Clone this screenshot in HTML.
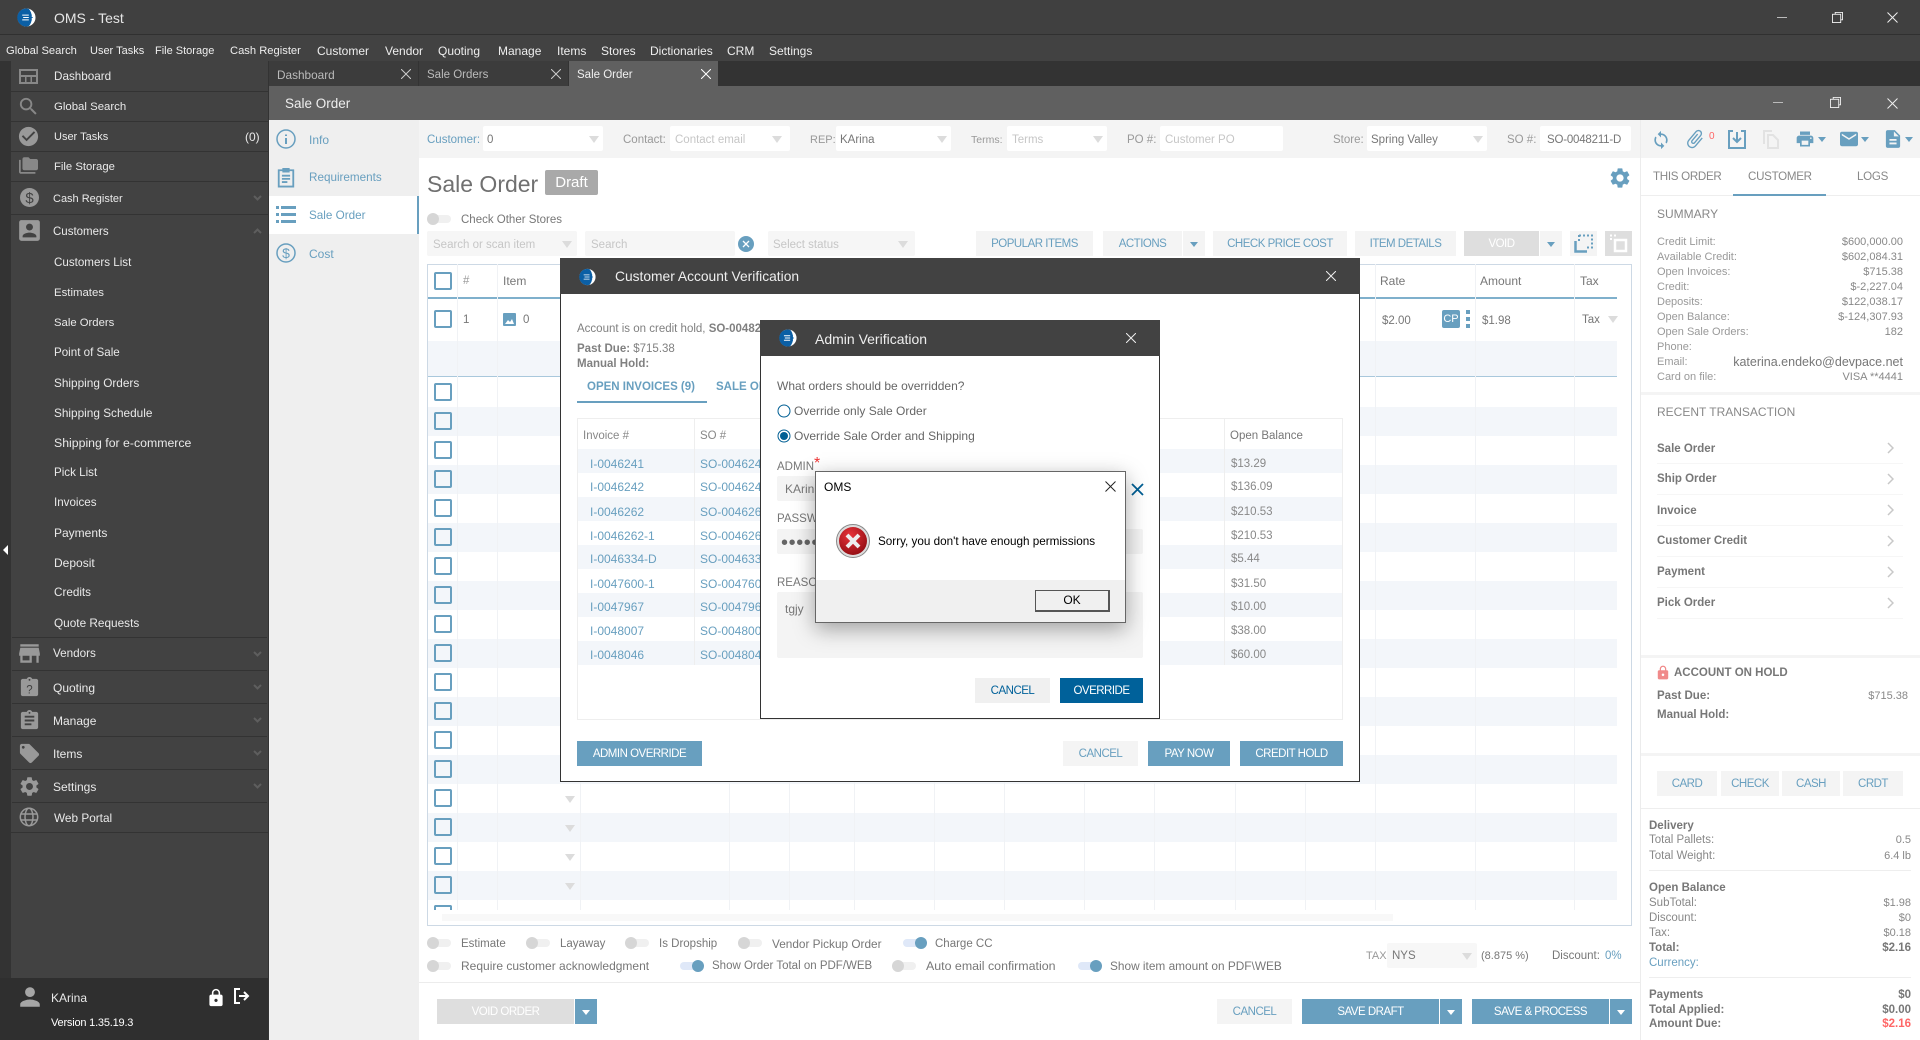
<!DOCTYPE html>
<html><head><meta charset="utf-8"><title>OMS - Test</title>
<style>
html,body{margin:0;padding:0;width:1920px;height:1040px;overflow:hidden;background:#fff}
body{position:relative;font-family:"Liberation Sans",sans-serif;font-size:11.5px;color:#777}
.r,.t,svg{position:absolute}
.t{line-height:16px;white-space:nowrap}
.s .t{color:#e9e9e9;font-size:12px}
.b{position:absolute;display:flex;align-items:center;justify-content:center;font-size:11.5px;letter-spacing:-.5px;white-space:nowrap;background:#f4f4f4;color:#689fbf}
.p{background:#689fbf;color:#fff}
.g{background:#dedede;color:#fff}
.f{position:absolute;background:#fff;border-radius:2px}
.l{color:#999}
.ph{color:#c6c6c6}
.v{color:#777}
.bl{color:#689fbf}
.sl{position:absolute;height:1px;background:#f6f6f6}
.w{position:absolute;width:0;height:0;border-left:5px solid transparent;border-right:5px solid transparent;border-top:7px solid #dcdcdc}
.cb{position:absolute;left:434px;width:14px;height:14px;border:2px solid #689fbf;border-radius:2px;background:transparent}
.tg{position:absolute;width:24px;height:8px;background:#f0f0f0;border-radius:4px}
.tg i{position:absolute;left:0;top:-2px;width:12px;height:12px;border-radius:6px;background:#d6d6d6}
.tg.on{background:#dfe8f8}
.tg.on i{left:12px;background:#689fbf}
.cl{position:absolute;top:264px;width:1px;height:646px;background:#f0f2f5}
.ca{position:absolute;width:0;height:0;border-left:4px solid transparent;border-right:4px solid transparent;border-top:5px solid #689fbf}
.ri{left:1657px;font-weight:bold;color:#777}
.m{color:#eee;font-size:12px}
.x{font-size:11px;color:#888}
</style></head><body>

<!-- top bars -->
<div class="r" style="left:0;top:0;width:1920px;height:34px;background:#404040"></div>
<div class="r" style="left:0;top:34px;width:1920px;height:1px;background:#303030"></div>
<div class="r" style="left:0;top:35px;width:1920px;height:26px;background:#424242"></div>
<div class="r" style="left:0;top:61px;width:1920px;height:25px;background:#333"></div>

<svg style="left:17px;top:8px" width="19" height="19" viewBox="0 0 20 20"><circle cx="10" cy="10" r="9.500" fill="#fff"/><path d="M12.500.9A9.500 9.500 0 1 0 12.500 19.100 13 13 0 0 0 15.500 10 13 13 0 0 0 12.500.9z" fill="#0b5fa5"/><path d="M5.500 7.500h7M6.500 10h6M5.500 12.500h7" stroke="#fff"/><path d="M12.500 7.500h3M12.500 10h4M12.500 12.500h3" stroke="#0b5fa5"/></svg>
<div class="t" style="left:54px;top:10px;font-size:14px;color:#e6e6e6">OMS - Test</div>

<div class="t m" style="left:6px;top:43px;font-size:11.200px">Global Search</div>
<div class="t m" style="left:90px;top:43px;font-size:11px">User Tasks</div>
<div class="t m" style="left:155px;top:43px;font-size:11px">File Storage</div>
<div class="t m" style="left:230px;top:43px;font-size:11.200px">Cash Register</div>
<div class="t m" style="left:317px;top:43px">Customer</div>
<div class="t m" style="left:385px;top:43px">Vendor</div>
<div class="t m" style="left:438px;top:43px">Quoting</div>
<div class="t m" style="left:498px;top:43px">Manage</div>
<div class="t m" style="left:557px;top:43px">Items</div>
<div class="t m" style="left:601px;top:43px">Stores</div>
<div class="t m" style="left:650px;top:43px">Dictionaries</div>
<div class="t m" style="left:727px;top:43px">CRM</div>
<div class="t m" style="left:769px;top:43px">Settings</div>

<!-- window controls -->
<div class="r" style="left:1777px;top:17px;width:10px;height:1px;background:#bbb"></div>
<svg style="left:1832px;top:12px" width="11" height="11" viewBox="0 0 12 12" fill="none" stroke="#eee"><path d="M3.500 2.500V.5h8v8h-2"/><rect x=".5" y="2.500" width="9" height="9"/></svg>
<svg style="left:1887px;top:12px" width="11" height="11" stroke="#eee"><path d="M.5.5l10 10M10.500.5l-10 10"/></svg>

<!-- sidebar -->
<div class="s">
<div class="r" style="left:0;top:61px;width:11px;height:917px;background:#333"></div>
<div class="r" style="left:11px;top:61px;width:257px;height:917px;background:#424242"></div>
<div class="r" style="left:268px;top:61px;width:1px;height:979px;background:#333"></div>
<div class="r" style="left:0;top:978px;width:268px;height:62px;background:#2f2f2f"></div>
<svg style="left:2px;top:545px" width="7" height="10"><path d="M6 0v10L1 5z" fill="#fff"/></svg>

<div class="r" style="left:11px;top:91px;width:257px;height:1px;background:#333"></div>
<div class="r" style="left:11px;top:121px;width:257px;height:1px;background:#333"></div>
<div class="r" style="left:11px;top:151px;width:257px;height:1px;background:#333"></div>
<div class="r" style="left:11px;top:181px;width:257px;height:1px;background:#333"></div>
<div class="r" style="left:11px;top:214px;width:257px;height:1px;background:#333"></div>
<div class="r" style="left:12px;top:637px;width:255px;height:1px;background:#333"></div>
<div class="r" style="left:12px;top:670px;width:255px;height:1px;background:#333"></div>
<div class="r" style="left:12px;top:703px;width:255px;height:1px;background:#333"></div>
<div class="r" style="left:12px;top:736px;width:255px;height:1px;background:#333"></div>
<div class="r" style="left:12px;top:769px;width:255px;height:1px;background:#333"></div>
<div class="r" style="left:12px;top:802px;width:255px;height:1px;background:#333"></div>
<div class="r" style="left:11px;top:832px;width:257px;height:1px;background:#333"></div>

<svg style="left:19px;top:69px" width="19" height="15" viewBox="0 0 19 15"><path d="M0 0h19v15H0zM2 2v4h15V2zM2 8v5h4V8zm5.500 0v5h4V8zM13 8v5h4V8z" fill="#888" fill-rule="evenodd"/></svg>
<svg style="left:17px;top:95px" width="23" height="23" viewBox="0 0 24 24" fill="#888"><path d="M15.500 14h-.79l-.28-.27C15.410 12.590 16 11.110 16 9.500 16 5.910 13.090 3 9.500 3S3 5.910 3 9.500 5.910 16 9.500 16c1.610 0 3.090-.59 4.230-1.570l.27.28v.79l5 4.990L20.490 19l-4.990-5zm-6 0C7.010 14 5 11.990 5 9.500S7.010 5 9.500 5 14 7.010 14 9.500 11.990 14 9.500 14z"/></svg>
<svg style="left:17px;top:125px" width="23" height="23" viewBox="0 0 24 24" fill="#999"><path d="M12 2C6.480 2 2 6.480 2 12s4.480 10 10 10 10-4.480 10-10S17.520 2 12 2zm-2 15l-5-5 1.410-1.410L10 14.170l7.590-7.590L19 8l-9 9z"/></svg>
<svg style="left:19px;top:157px" width="19" height="17" viewBox="0 0 22 19" fill="#888"><path d="M0 3v14c0 1 1 2 2 2h17v-2H2V3z"/><path d="M4 2c0-1 1-2 2-2h5l2 2h7c1 0 2 1 2 2v9c0 1-1 2-2 2H6c-1 0-2-1-2-2z"/></svg>
<svg style="left:20px;top:188px" width="19" height="19" viewBox="0 0 19 19"><circle cx="9.500" cy="9.500" r="9.500" fill="#999"/><text x="9.500" y="15" text-anchor="middle" font-family="Liberation Sans" font-size="15" fill="#424242">$</text></svg>
<svg style="left:18px;top:219px" width="23" height="23" viewBox="2 2 20 20" fill="#999"><path d="M3 5v14c0 1.100.89 2 2 2h14c1.100 0 2-.9 2-2V5c0-1.100-.9-2-2-2H5c-1.110 0-2 .9-2 2zm12 4c0 1.660-1.340 3-3 3s-3-1.340-3-3 1.340-3 3-3 3 1.340 3 3zm-9 8c0-2 4-3.100 6-3.100s6 1.100 6 3.100v1H6v-1z"/></svg>
<svg style="left:18px;top:642px" width="23" height="23" viewBox="2 3 20 18" fill="#999"><path d="M20 4H4v2h16V4zm1 10v-2l-1-5H4l-1 5v2h1v6h10v-6h4v6h2v-6h1zm-9 4H6v-4h6v4z"/></svg>
<svg style="left:18px;top:676px" width="23" height="23" viewBox="0 0 24 24" fill="#999"><path d="M19 3h-4.180C14.400 1.840 13.300 1 12 1c-1.300 0-2.400.84-2.820 2H5c-1.100 0-2 .9-2 2v14c0 1.100.9 2 2 2h14c1.100 0 2-.9 2-2V5c0-1.100-.9-2-2-2zm-7 0c.55 0 1 .45 1 1s-.45 1-1 1-1-.45-1-1 .45-1 1-1z"/><text x="12" y="18" text-anchor="middle" font-size="12" font-family="Liberation Sans" fill="#424242">?</text></svg>
<svg style="left:18px;top:709px" width="23" height="23" viewBox="0 0 24 24" fill="#999"><path d="M19 3h-4.180C14.400 1.840 13.300 1 12 1c-1.300 0-2.400.84-2.820 2H5c-1.100 0-2 .9-2 2v14c0 1.100.9 2 2 2h14c1.100 0 2-.9 2-2V5c0-1.100-.9-2-2-2zm-7 0c.55 0 1 .45 1 1s-.45 1-1 1-1-.45-1-1 .45-1 1-1zm2 14H7v-2h7v2zm3-4H7v-2h10v2zm0-4H7V7h10v2z"/></svg>
<svg style="left:18px;top:742px" width="23" height="23" viewBox="0 0 24 24" fill="#999"><path d="M21.410 11.580l-9-9C12.050 2.220 11.550 2 11 2H4c-1.100 0-2 .9-2 2v7c0 .55.22 1.050.59 1.420l9 9c.36.36.86.58 1.410.58.55 0 1.050-.22 1.410-.59l7-7c.37-.36.59-.86.59-1.410 0-.55-.23-1.060-.59-1.420zM5.500 7C4.670 7 4 6.330 4 5.500S4.670 4 5.500 4 7 4.670 7 5.500 6.330 7 5.500 7z"/></svg>
<svg style="left:18px;top:775px" width="23" height="23" viewBox="0 0 24 24" fill="#999"><path d="M19.140 12.940c.04-.3.06-.61.06-.94 0-.32-.02-.64-.07-.94l2.030-1.580c.18-.14.23-.41.12-.61l-1.920-3.320c-.12-.22-.37-.29-.59-.22l-2.390.96c-.5-.38-1.030-.7-1.620-.94l-.36-2.540c-.04-.24-.24-.41-.48-.41h-3.840c-.24 0-.43.17-.47.41l-.36 2.540c-.59.24-1.130.57-1.620.94l-2.390-.96c-.22-.08-.47 0-.59.22L2.740 8.870c-.12.21-.08.47.12.61l2.030 1.580c-.05.3-.09.63-.09.94s.02.64.07.94l-2.030 1.580c-.18.14-.23.41-.12.61l1.920 3.320c.12.22.37.29.59.22l2.390-.96c.5.38 1.030.7 1.620.94l.36 2.540c.05.24.24.41.48.41h3.840c.24 0 .44-.17.47-.41l.36-2.540c.59-.24 1.130-.56 1.620-.94l2.390.96c.22.08.47 0 .59-.22l1.920-3.320c.12-.22.07-.47-.12-.61l-2.010-1.580zM12 15.600c-1.980 0-3.600-1.620-3.600-3.600s1.620-3.600 3.600-3.600 3.600 1.620 3.600 3.600-1.620 3.600-3.600 3.600z"/></svg>
<svg style="left:19px;top:807px" width="20" height="20" viewBox="0 0 20 20" fill="none" stroke="#999" stroke-width="1.500"><circle cx="10" cy="10" r="8.700"/><ellipse cx="10" cy="10" rx="4" ry="8.700"/><path d="M2 7h16M2 13h16"/></svg>

<div class="t" style="left:54px;top:69px;font-size:11.700px">Dashboard</div>
<div class="t" style="left:54px;top:99px;font-size:11.400px">Global Search</div>
<div class="t" style="left:54px;top:129px;font-size:11px">User Tasks</div>
<div class="t" style="left:245px;top:129px">(0)</div>
<div class="t" style="left:54px;top:159px;font-size:11.300px">File Storage</div>
<div class="t" style="left:53px;top:191px;font-size:11px">Cash Register</div>
<div class="t" style="left:53px;top:224px;font-size:11.500px">Customers</div>
<div class="t" style="left:54px;top:255px;font-size:11.600px">Customers List</div>
<div class="t" style="left:54px;top:285px;font-size:11.400px">Estimates</div>
<div class="t" style="left:54px;top:315px;font-size:11.300px">Sale Orders</div>
<div class="t" style="left:54px;top:345px;font-size:11.600px">Point of Sale</div>
<div class="t" style="left:54px;top:375px;font-size:11.800px">Shipping Orders</div>
<div class="t" style="left:54px;top:405px;font-size:11.800px">Shipping Schedule</div>
<div class="t" style="left:54px;top:435px;font-size:12.300px">Shipping for e-commerce</div>
<div class="t" style="left:54px;top:465px;font-size:11.600px">Pick List</div>
<div class="t" style="left:54px;top:495px;font-size:11.600px">Invoices</div>
<div class="t" style="left:54px;top:525px">Payments</div>
<div class="t" style="left:54px;top:555px">Deposit</div>
<div class="t" style="left:54px;top:585px;font-size:11.700px">Credits</div>
<div class="t" style="left:54px;top:615px;font-size:11.800px">Quote Requests</div>
<div class="t" style="left:53px;top:646px;font-size:11.700px">Vendors</div>
<div class="t" style="left:53px;top:680px">Quoting</div>
<div class="t" style="left:53px;top:713px">Manage</div>
<div class="t" style="left:53px;top:746px">Items</div>
<div class="t" style="left:53px;top:779px">Settings</div>
<div class="t" style="left:54px;top:810px;font-size:11.800px">Web Portal</div>

<svg style="left:253px;top:195px" width="9" height="6" fill="none" stroke="#5e5e5e" stroke-width="2"><path d="M1 1l3.500 3.500L8 1"/></svg>
<svg style="left:253px;top:228px" width="9" height="6" fill="none" stroke="#5e5e5e" stroke-width="2"><path d="M1 5l3.500-3.500L8 5"/></svg>
<svg style="left:253px;top:651px" width="9" height="6" fill="none" stroke="#5e5e5e" stroke-width="2"><path d="M1 1l3.500 3.500L8 1"/></svg>
<svg style="left:253px;top:684px" width="9" height="6" fill="none" stroke="#5e5e5e" stroke-width="2"><path d="M1 1l3.500 3.500L8 1"/></svg>
<svg style="left:253px;top:717px" width="9" height="6" fill="none" stroke="#5e5e5e" stroke-width="2"><path d="M1 1l3.500 3.500L8 1"/></svg>
<svg style="left:253px;top:750px" width="9" height="6" fill="none" stroke="#5e5e5e" stroke-width="2"><path d="M1 1l3.500 3.500L8 1"/></svg>
<svg style="left:253px;top:783px" width="9" height="6" fill="none" stroke="#5e5e5e" stroke-width="2"><path d="M1 1l3.500 3.500L8 1"/></svg>

<svg style="left:18px;top:986px" width="24" height="22" viewBox="3 3 18 18" fill="#a6a6a6"><path d="M12 12c2.210 0 4-1.790 4-4s-1.790-4-4-4-4 1.790-4 4 1.790 4 4 4zm0 2c-2.670 0-8 1.340-8 4v2h16v-2c0-2.660-5.330-4-8-4z"/></svg>
<div class="t" style="left:51px;top:990px">KArina</div>
<div class="t" style="left:51px;top:1015px;font-size:11px;color:#fff;letter-spacing:-.2px">Version 1.35.19.3</div>
<svg style="left:207px;top:988px" width="18" height="19" viewBox="3 0 18 23" fill="#fff"><path d="M18 8h-1V6c0-2.760-2.240-5-5-5S7 3.240 7 6v2H6c-1.100 0-2 .9-2 2v10c0 1.100.9 2 2 2h12c1.100 0 2-.9 2-2V10c0-1.100-.9-2-2-2zm-6 9c-1.100 0-2-.9-2-2s.9-2 2-2 2 .9 2 2-.9 2-2 2zm3.100-9H8.900V6c0-1.710 1.390-3.100 3.100-3.100 1.710 0 3.100 1.390 3.100 3.100v2z"/></svg>
<svg style="left:234px;top:988px" width="17" height="16" viewBox="0 0 17 16" fill="none" stroke="#fff" stroke-width="2"><path d="M6 1H1v14h5"/><path d="M5 8h9M10 4l4 4-4 4"/></svg>
</div>

<!-- tabs -->
<div class="r" style="left:269px;top:61px;width:149px;height:25px;background:#3c3c3c"></div>
<div class="r" style="left:419px;top:61px;width:149px;height:25px;background:#3c3c3c"></div>
<div class="r" style="left:569px;top:61px;width:149px;height:25px;background:#606060"></div>
<div class="t" style="left:277px;top:67px;font-size:11.800px;color:#bbb">Dashboard</div>
<div class="t" style="left:427px;top:67px;font-size:11.500px;color:#bbb">Sale Orders</div>
<div class="t" style="left:577px;top:67px;font-size:11.500px;color:#f0f0f0">Sale Order</div>
<svg style="left:401px;top:69px" width="10" height="10" stroke="#ccc"><path d="M0 0l10 10M10 0L0 10"/></svg>
<svg style="left:551px;top:69px" width="10" height="10" stroke="#ccc"><path d="M0 0l10 10M10 0L0 10"/></svg>
<svg style="left:701px;top:69px" width="10" height="10" stroke="#fff"><path d="M0 0l10 10M10 0L0 10"/></svg>

<!-- sub window title -->
<div class="r" style="left:269px;top:86px;width:1651px;height:34px;background:#606060"></div>
<div class="t" style="left:285px;top:96px;font-size:13.500px;color:#eee">Sale Order</div>
<div class="r" style="left:1773px;top:102px;width:10px;height:1px;background:#bbb"></div>
<svg style="left:1830px;top:97px" width="11" height="11" viewBox="0 0 12 12" fill="none" stroke="#eee"><path d="M3.500 2.500V.5h8v8h-2"/><rect x=".5" y="2.500" width="9" height="9"/></svg>
<svg style="left:1887px;top:98px" width="11" height="11" stroke="#eee"><path d="M.5.5l10 10M10.500.5l-10 10"/></svg>

<!-- left nav -->
<div class="r" style="left:269px;top:120px;width:150px;height:920px;background:#efefef"></div>
<div class="r" style="left:269px;top:196px;width:150px;height:38px;background:#fff"></div>
<div class="r" style="left:417px;top:196px;width:2px;height:38px;background:#689fbf"></div>
<svg style="left:276px;top:129px" width="20" height="20" fill="none" stroke="#689fbf" stroke-width="1.500"><circle cx="10" cy="10" r="9"/><path d="M10 9v6M10 5.500v1.500" stroke-width="2"/></svg>
<svg style="left:276px;top:167px" width="20" height="21" viewBox="1 0 22 22" fill="none" stroke="#689fbf" stroke-width="2"><path d="M9 3H4v18h16V3h-5"/><path d="M9 1.500h6v3H9z" fill="#689fbf"/><path d="M7.500 9h9M7.500 12.500h9M7.500 16h6"/></svg>
<svg style="left:276px;top:205px" width="20" height="20" fill="#689fbf"><path d="M0 1h3v3H0zM5 1h15v3H5zM0 8h3v3H0zM5 8h15v3H5zM0 15h3v3H0zM5 15h15v3H5z"/></svg>
<svg style="left:276px;top:243px" width="20" height="20"><circle cx="10" cy="10" r="9" fill="none" stroke="#689fbf" stroke-width="1.500"/><text x="10" y="15" text-anchor="middle" font-family="Liberation Sans" font-size="14" fill="#689fbf">$</text></svg>
<div class="t bl" style="left:309px;top:132px;font-size:12px">Info</div>
<div class="t bl" style="left:309px;top:170px;font-size:11.700px">Requirements</div>
<div class="t bl" style="left:309px;top:208px;font-size:11.700px">Sale Order</div>
<div class="t bl" style="left:309px;top:246px;font-size:12px">Cost</div>

<!-- toolbar -->
<div class="r" style="left:419px;top:120px;width:1501px;height:38px;background:#f4f4f4"></div>
<div class="t bl" style="left:427px;top:132px">Customer:</div>
<div class="f" style="left:483px;top:126px;width:120px;height:25px"></div>
<div class="t v" style="left:487px;top:132px">0</div><div class="w" style="left:589px;top:136px"></div>
<div class="t l" style="left:623px;top:132px">Contact:</div>
<div class="f" style="left:670px;top:126px;width:120px;height:25px"></div>
<div class="t ph" style="left:675px;top:132px">Contact email</div><div class="w" style="left:772px;top:136px"></div>
<div class="t l" style="left:810px;top:132px;font-size:11px">REP:</div>
<div class="f" style="left:836px;top:126px;width:115px;height:25px"></div>
<div class="t v" style="left:840px;top:132px">KArina</div><div class="w" style="left:937px;top:136px"></div>
<div class="t l" style="left:971px;top:132px;font-size:10.500px">Terms:</div>
<div class="f" style="left:1007px;top:126px;width:100px;height:25px"></div>
<div class="t ph" style="left:1012px;top:132px">Terms</div><div class="w" style="left:1093px;top:136px"></div>
<div class="t l" style="left:1127px;top:132px">PO #:</div>
<div class="f" style="left:1160px;top:126px;width:123px;height:25px"></div>
<div class="t ph" style="left:1165px;top:132px">Customer PO</div>
<div class="t l" style="left:1333px;top:132px">Store:</div>
<div class="f" style="left:1367px;top:126px;width:120px;height:25px"></div>
<div class="t v" style="left:1371px;top:132px">Spring Valley</div><div class="w" style="left:1473px;top:136px"></div>
<div class="t l" style="left:1507px;top:132px">SO #:</div>
<div class="f" style="left:1540px;top:126px;width:91px;height:25px"></div>
<div class="t v" style="left:1547px;top:132px;letter-spacing:-.2px">SO-0048211-D</div>

<!-- right toolbar icons -->
<div class="r" style="left:1640px;top:120px;width:1px;height:920px;background:#ececec"></div>
<svg style="left:1651px;top:130px" width="20" height="20" viewBox="0 0 24 24" fill="#689fbf"><path d="M12 4V1L8 5l4 4V6c3.310 0 6 2.690 6 6 0 1.010-.25 1.970-.7 2.800l1.460 1.460C19.540 15.030 20 13.570 20 12c0-4.420-3.580-8-8-8zm0 14c-3.310 0-6-2.690-6-6 0-1.010.25-1.970.7-2.800L5.240 7.740C4.460 8.970 4 10.430 4 12c0 4.420 3.580 8 8 8v3l4-4-4-4v3z"/></svg>
<svg style="left:1684px;top:128px" width="22" height="22" viewBox="0 0 24 24" fill="#689fbf"><path transform="rotate(40 12 12)" d="M16.500 6v11.500c0 2.210-1.790 4-4 4s-4-1.790-4-4V5c0-1.380 1.120-2.500 2.500-2.500s2.500 1.120 2.500 2.500v10.500c0 .55-.45 1-1 1s-1-.45-1-1V6H10v9.500c0 1.380 1.120 2.500 2.500 2.500s2.500-1.120 2.500-2.500V5c0-2.210-1.790-4-4-4S7 2.790 7 5v12.500c0 3.040 2.460 5.500 5.500 5.500s5.500-2.460 5.500-5.500V6h-1.500z"/></svg>
<div class="t" style="left:1709px;top:129px;font-size:10px;color:#f66">0</div>
<svg style="left:1728px;top:130px" width="18" height="19" fill="none" stroke="#689fbf" stroke-width="2"><path d="M5 1H1v17h16V1h-4"/><path d="M9 2v10M5 8l4 4 4-4"/></svg>
<svg style="left:1763px;top:130px" width="16" height="19" fill="none" stroke="#e2e2e2" stroke-width="2"><path d="M9 1H1v13M5 5h5l5 5v8H5z"/></svg>
<svg style="left:1795px;top:129px" width="20" height="20" viewBox="0 0 24 24" fill="#689fbf"><path d="M19 8H5c-1.660 0-3 1.340-3 3v6h4v4h12v-4h4v-6c0-1.660-1.340-3-3-3zm-3 11H8v-5h8v5zm3-7c-.55 0-1-.45-1-1s.45-1 1-1 1 .45 1 1-.45 1-1 1zm-1-9H6v4h12V3z"/></svg>
<div class="ca" style="left:1818px;top:137px"></div>
<svg style="left:1840px;top:129px" width="18" height="20" viewBox="2 3 20 18" fill="#689fbf"><path d="M20 4H4c-1.100 0-1.990.9-1.990 2L2 18c0 1.100.9 2 2 2h16c1.100 0 2-.9 2-2V6c0-1.100-.9-2-2-2zm0 4l-8 5-8-5V6l8 5 8-5v2z"/></svg>
<div class="ca" style="left:1861px;top:137px"></div>
<svg style="left:1885px;top:129px" width="16" height="20" viewBox="3 2 18 20" fill="#689fbf"><path d="M14 2H6c-1.100 0-1.990.9-1.990 2L4 20c0 1.100.89 2 1.990 2H18c1.100 0 2-.9 2-2V8l-6-6zm2 16H8v-2h8v2zm0-4H8v-2h8v2zm-3-5V3.500L18.500 9H13z"/></svg>
<div class="ca" style="left:1905px;top:137px"></div>

<!-- heading -->
<div class="t" style="left:427px;top:171px;font-size:23px;line-height:26px;color:#707070">Sale Order</div>
<div class="r" style="left:545px;top:170px;width:53px;height:25px;background:#a9a9a9;border-radius:2px;color:#fff;font-size:15px;line-height:25px;text-align:center">Draft</div>
<svg style="left:1610px;top:168px" width="20" height="20" viewBox="2 2 20 20" fill="#689fbf"><path d="M19.140 12.940c.04-.3.06-.61.06-.94 0-.32-.02-.64-.07-.94l2.030-1.580c.18-.14.23-.41.12-.61l-1.920-3.320c-.12-.22-.37-.29-.59-.22l-2.390.96c-.5-.38-1.030-.7-1.620-.94l-.36-2.540c-.04-.24-.24-.41-.48-.41h-3.840c-.24 0-.43.17-.47.41l-.36 2.540c-.59.24-1.130.57-1.620.94l-2.390-.96c-.22-.08-.47 0-.59.22L2.740 8.870c-.12.21-.08.47.12.61l2.030 1.580c-.05.3-.09.63-.09.94s.02.64.07.94l-2.030 1.580c-.18.14-.23.41-.12.61l1.920 3.320c.12.22.37.29.59.22l2.390-.96c.5.38 1.030.7 1.620.94l.36 2.540c.05.24.24.41.48.41h3.840c.24 0 .44-.17.47-.41l.36-2.540c.59-.24 1.130-.56 1.620-.94l2.390.96c.22.08.47 0 .59-.22l1.920-3.320c.12-.22.07-.47-.12-.61l-2.010-1.580zM12 15.600c-1.980 0-3.600-1.620-3.600-3.600s1.620-3.600 3.600-3.600 3.600 1.620 3.600 3.600-1.620 3.600-3.600 3.600z"/></svg>

<div class="tg" style="left:427px;top:215px"><i></i></div>
<div class="t v" style="left:461px;top:212px">Check Other Stores</div>

<!-- search row -->
<div class="r" style="left:427px;top:231px;width:150px;height:25px;background:#f6f6f6;border-radius:2px"></div>
<div class="t ph" style="left:433px;top:237px">Search or scan item</div><div class="w" style="left:562px;top:241px"></div>
<div class="r" style="left:585px;top:231px;width:150px;height:25px;background:#f6f6f6;border-radius:2px"></div>
<div class="t ph" style="left:591px;top:237px">Search</div>
<svg style="left:738px;top:236px" width="16" height="16"><circle cx="8" cy="8" r="8" fill="#689fbf"/><path d="M5 5l6 6M11 5l-6 6" stroke="#fff" stroke-width="1.300"/></svg>
<div class="r" style="left:768px;top:231px;width:147px;height:25px;background:#f6f6f6;border-radius:2px"></div>
<div class="t ph" style="left:773px;top:237px">Select status</div><div class="w" style="left:898px;top:241px"></div>

<div class="b" style="left:976px;top:231px;width:117px;height:25px">POPULAR ITEMS</div>
<div class="b" style="left:1103px;top:231px;width:79px;height:25px">ACTIONS</div>
<div class="b" style="left:1183px;top:231px;width:22px;height:25px"></div><div class="ca" style="left:1190px;top:242px"></div>
<div class="b" style="left:1213px;top:231px;width:134px;height:25px">CHECK PRICE COST</div>
<div class="b" style="left:1355px;top:231px;width:101px;height:25px">ITEM DETAILS</div>
<div class="b g" style="left:1464px;top:231px;width:75px;height:25px">VOID</div>
<div class="b" style="left:1540px;top:231px;width:22px;height:25px"></div><div class="ca" style="left:1547px;top:242px"></div>
<div class="b" style="left:1570px;top:231px;width:27px;height:25px"></div>
<svg style="left:1574px;top:234px" width="19" height="19" fill="none" stroke="#689fbf"><path d="M5 1.500h13v12H13" stroke-width="2" stroke-dasharray="2 2"/><path d="M5 1v7" stroke-width="2" stroke-dasharray="2 2"/><path d="M1.500 7v10.500H13" stroke-width="2.500"/></svg>
<div class="b g" style="left:1605px;top:231px;width:27px;height:25px"></div>
<svg style="left:1609px;top:234px" width="19" height="19" fill="none" stroke="#fff"><path d="M1 1.500h7M1 5h2" stroke-width="2" stroke-dasharray="2 2"/><rect x="6" y="6" width="11" height="11" stroke-width="2.500"/></svg>

<!-- table -->
<div class="r" style="left:427px;top:264px;width:1205px;height:662px;border:1px solid #cdd9e5;box-sizing:border-box"></div>
<div class="r" style="left:428px;top:341px;width:1189px;height:35px;background:#f3f6fa"></div>
<div class="r" style="left:428px;top:376px;width:1189px;height:1px;background:#a9c8dc"></div>
<div class="r" style="left:428px;top:378px;width:1189px;height:532px;background:repeating-linear-gradient(#fff 0 29px,#f3f6fa 29px 58px)"></div>
<div class="r" style="left:428px;top:297px;width:1189px;height:2px;background:#7fb0cc"></div>
<div class="cl" style="left:457px"></div><div class="cl" style="left:497px"></div><div class="cl" style="left:580px"></div>
<div class="cl" style="left:729px"></div><div class="cl" style="left:789px"></div><div class="cl" style="left:854px"></div>
<div class="cl" style="left:934px"></div><div class="cl" style="left:1004px"></div><div class="cl" style="left:1084px"></div>
<div class="cl" style="left:1154px"></div><div class="cl" style="left:1235px"></div><div class="cl" style="left:1305px"></div>
<div class="cl" style="left:1375px"></div><div class="cl" style="left:1475px"></div><div class="cl" style="left:1574px"></div>

<div class="cb" style="top:272px"></div><div class="cb" style="top:310px"></div>
<div class="t l" style="left:463px;top:273px">#</div>
<div class="t v" style="left:503px;top:273px;font-size:12px">Item</div>
<div class="t v" style="left:1380px;top:273px;font-size:12px">Rate</div>
<div class="t v" style="left:1480px;top:273px;font-size:12px">Amount</div>
<div class="t v" style="left:1580px;top:273px;font-size:12px">Tax</div>
<div class="t v" style="left:463px;top:312px">1</div>
<svg style="left:503px;top:313px" width="13" height="13"><rect width="13" height="13" rx="1" fill="#689fbf"/><path d="M2 11l3-4 2 2 2-3 2 5z" fill="#fff"/></svg>
<div class="t v" style="left:523px;top:312px">0</div>
<div class="t v" style="left:1382px;top:313px">$2.00</div>
<div class="r" style="left:1442px;top:310px;width:18px;height:18px;background:#689fbf;border-radius:2px;color:#fff;font-size:11px;line-height:18px;text-align:center">CP</div>
<div class="r" style="left:1466px;top:310px;width:4px;height:4px;background:#689fbf"></div>
<div class="r" style="left:1466px;top:317px;width:4px;height:4px;background:#689fbf"></div>
<div class="r" style="left:1466px;top:324px;width:4px;height:4px;background:#689fbf"></div>
<div class="t v" style="left:1482px;top:313px">$1.98</div>
<div class="t v" style="left:1582px;top:312px">Tax</div>
<div class="w" style="left:1608px;top:316px"></div>

<div class="cb" style="top:383px"></div><div class="cb" style="top:412px"></div><div class="cb" style="top:441px"></div><div class="cb" style="top:470px"></div>
<div class="cb" style="top:499px"></div><div class="cb" style="top:528px"></div><div class="cb" style="top:557px"></div><div class="cb" style="top:586px"></div>
<div class="cb" style="top:615px"></div><div class="cb" style="top:644px"></div><div class="cb" style="top:673px"></div><div class="cb" style="top:702px"></div>
<div class="cb" style="top:731px"></div><div class="cb" style="top:760px"></div><div class="cb" style="top:789px"></div><div class="cb" style="top:818px"></div>
<div class="cb" style="top:847px"></div><div class="cb" style="top:876px"></div>
<div class="r" style="left:434px;top:905px;width:18px;height:5px;border:2px solid #689fbf;border-bottom:0;box-sizing:border-box;border-radius:2px 2px 0 0"></div>
<div class="w" style="left:565px;top:796px"></div><div class="w" style="left:565px;top:825px"></div><div class="w" style="left:565px;top:854px"></div><div class="w" style="left:565px;top:883px"></div>
<div class="r" style="left:442px;top:914px;width:951px;height:7px;background:#f8f8f8"></div>

<!-- toggles -->
<div class="tg" style="left:427px;top:939px"><i></i></div><div class="t v" style="left:461px;top:936px">Estimate</div>
<div class="tg" style="left:526px;top:939px"><i></i></div><div class="t v" style="left:560px;top:936px">Layaway</div>
<div class="tg" style="left:625px;top:939px"><i></i></div><div class="t v" style="left:659px;top:936px">Is Dropship</div>
<div class="tg" style="left:738px;top:939px"><i></i></div><div class="t v" style="left:772px;top:936px;font-size:11.800px">Vendor Pickup Order</div>
<div class="tg on" style="left:903px;top:939px"><i></i></div><div class="t v" style="left:935px;top:936px">Charge CC</div>
<div class="tg" style="left:427px;top:962px"><i></i></div><div class="t v" style="left:461px;top:958px;font-size:12px">Require customer acknowledgment</div>
<div class="tg on" style="left:680px;top:962px"><i></i></div><div class="t v" style="left:712px;top:958px">Show Order Total on PDF/WEB</div>
<div class="tg" style="left:892px;top:962px"><i></i></div><div class="t v" style="left:926px;top:958px;font-size:12.400px">Auto email confirmation</div>
<div class="tg on" style="left:1078px;top:962px"><i></i></div><div class="t v" style="left:1110px;top:958px;font-size:11.850px">Show item amount on PDF\WEB</div>

<div class="t l" style="left:1366px;top:948px;font-size:11px">TAX</div>
<div class="r" style="left:1387px;top:943px;width:90px;height:25px;background:#f7f7f7;border-radius:2px"></div>
<div class="t v" style="left:1392px;top:948px">NYS</div><div class="w" style="left:1462px;top:953px"></div>
<div class="t v" style="left:1481px;top:948px;font-size:11px">(8.875 %)</div>
<div class="t v" style="left:1552px;top:948px">Discount:</div>
<div class="t bl" style="left:1605px;top:948px">0%</div>

<!-- footer -->
<div class="r" style="left:419px;top:982px;width:1221px;height:1px;background:#ececec"></div>
<div class="b g" style="left:437px;top:999px;width:137px;height:25px">VOID ORDER</div>
<div class="b p" style="left:575px;top:999px;width:22px;height:25px"></div><div class="ca" style="left:582px;top:1010px;border-top-color:#fff"></div>
<div class="b" style="left:1217px;top:999px;width:75px;height:25px">CANCEL</div>
<div class="b p" style="left:1302px;top:999px;width:137px;height:25px">SAVE DRAFT</div>
<div class="b p" style="left:1440px;top:999px;width:22px;height:25px"></div><div class="ca" style="left:1447px;top:1010px;border-top-color:#fff"></div>
<div class="b p" style="left:1472px;top:999px;width:137px;height:25px">SAVE &amp; PROCESS</div>
<div class="b p" style="left:1610px;top:999px;width:22px;height:25px"></div><div class="ca" style="left:1617px;top:1010px;border-top-color:#fff"></div>

<!-- right panel -->
<div class="t" style="left:1653px;top:169px;font-size:11.600px;letter-spacing:-.3px;color:#888">THIS ORDER</div>
<div class="t" style="left:1748px;top:169px;font-size:11.600px;letter-spacing:-.3px;color:#888">CUSTOMER</div>
<div class="t" style="left:1857px;top:169px;font-size:11.600px;letter-spacing:-.3px;color:#888">LOGS</div>
<div class="r" style="left:1641px;top:195px;width:279px;height:1px;background:#eee"></div>
<div class="r" style="left:1733px;top:194px;width:93px;height:2px;background:#689fbf"></div>
<div class="t" style="left:1657px;top:206px;font-size:12px;color:#888">SUMMARY</div>
<div class="t l" style="left:1657px;top:234px;font-size:11px">Credit Limit:</div><div class="t x" style="right:17px;top:234px">$600,000.00</div>
<div class="t l" style="left:1657px;top:249px;font-size:11px">Available Credit:</div><div class="t x" style="right:17px;top:249px">$602,084.31</div>
<div class="t l" style="left:1657px;top:264px;font-size:11px">Open Invoices:</div><div class="t x" style="right:17px;top:264px">$715.38</div>
<div class="t l" style="left:1657px;top:279px;font-size:11px">Credit:</div><div class="t x" style="right:17px;top:279px">$-2,227.04</div>
<div class="t l" style="left:1657px;top:294px;font-size:11px">Deposits:</div><div class="t x" style="right:17px;top:294px">$122,038.17</div>
<div class="t l" style="left:1657px;top:309px;font-size:11px">Open Balance:</div><div class="t x" style="right:17px;top:309px">$-124,307.93</div>
<div class="t l" style="left:1657px;top:324px;font-size:11px">Open Sale Orders:</div><div class="t x" style="right:17px;top:324px">182</div>
<div class="t l" style="left:1657px;top:339px;font-size:11px">Phone:</div>
<div class="t l" style="left:1657px;top:354px;font-size:11px">Email:</div><div class="t v" style="right:17px;top:354px;font-size:12.500px">katerina.endeko@devpace.net</div>
<div class="t l" style="left:1657px;top:369px;font-size:11px">Card on file:</div><div class="t x" style="right:17px;top:369px">VISA **4441</div>

<div class="r" style="left:1641px;top:392px;width:279px;height:3px;background:#f4f4f4"></div>
<div class="t" style="left:1657px;top:404px;font-size:12px;color:#888">RECENT TRANSACTION</div>
<div class="t ri" style="top:441px">Sale Order</div>
<div class="t ri" style="top:471px">Ship Order</div>
<div class="t ri" style="top:503px">Invoice</div>
<div class="t ri" style="top:533px">Customer Credit</div>
<div class="t ri" style="top:564px">Payment</div>
<div class="t ri" style="top:595px">Pick Order</div>
<div class="sl" style="left:1657px;top:463px;width:246px"></div>
<div class="sl" style="left:1657px;top:494px;width:246px"></div>
<div class="sl" style="left:1657px;top:525px;width:246px"></div>
<div class="sl" style="left:1657px;top:556px;width:246px"></div>
<div class="sl" style="left:1657px;top:587px;width:246px"></div>
<div class="sl" style="left:1657px;top:618px;width:246px"></div>
<svg style="left:1887px;top:442px" width="7" height="12" fill="none" stroke="#c8c8c8" stroke-width="1.500"><path d="M1 1l5 5-5 5"/></svg>
<svg style="left:1887px;top:473px" width="7" height="12" fill="none" stroke="#c8c8c8" stroke-width="1.500"><path d="M1 1l5 5-5 5"/></svg>
<svg style="left:1887px;top:504px" width="7" height="12" fill="none" stroke="#c8c8c8" stroke-width="1.500"><path d="M1 1l5 5-5 5"/></svg>
<svg style="left:1887px;top:535px" width="7" height="12" fill="none" stroke="#c8c8c8" stroke-width="1.500"><path d="M1 1l5 5-5 5"/></svg>
<svg style="left:1887px;top:566px" width="7" height="12" fill="none" stroke="#c8c8c8" stroke-width="1.500"><path d="M1 1l5 5-5 5"/></svg>
<svg style="left:1887px;top:597px" width="7" height="12" fill="none" stroke="#c8c8c8" stroke-width="1.500"><path d="M1 1l5 5-5 5"/></svg>

<div class="r" style="left:1641px;top:655px;width:279px;height:3px;background:#f4f4f4"></div>
<svg style="left:1656px;top:665px" width="14" height="15" viewBox="3 0 18 23" fill="#f08a8a"><path d="M18 8h-1V6c0-2.760-2.240-5-5-5S7 3.240 7 6v2H6c-1.100 0-2 .9-2 2v10c0 1.100.9 2 2 2h12c1.100 0 2-.9 2-2V10c0-1.100-.9-2-2-2zm-6 9c-1.100 0-2-.9-2-2s.9-2 2-2 2 .9 2 2-.9 2-2 2zm3.100-9H8.900V6c0-1.710 1.390-3.100 3.100-3.100 1.710 0 3.100 1.390 3.100 3.100v2z"/></svg>
<div class="t" style="left:1674px;top:665px;font-weight:bold;color:#777">ACCOUNT ON HOLD</div>
<div class="t ri" style="top:688px">Past Due:</div><div class="t x" style="right:12px;top:688px">$715.38</div>
<div class="t ri" style="top:707px">Manual Hold:</div>

<div class="r" style="left:1641px;top:753px;width:279px;height:3px;background:#f4f4f4"></div>
<div class="b" style="left:1657px;top:771px;width:60px;height:25px">CARD</div>
<div class="b" style="left:1721px;top:771px;width:58px;height:25px">CHECK</div>
<div class="b" style="left:1782px;top:771px;width:58px;height:25px">CASH</div>
<div class="b" style="left:1843px;top:771px;width:60px;height:25px">CRDT</div>
<div class="r" style="left:1641px;top:808px;width:279px;height:1px;background:#eee"></div>

<div class="t" style="left:1649px;top:818px;font-weight:bold;color:#777">Delivery</div>
<div class="t v" style="left:1649px;top:832px;color:#888">Total Pallets:</div><div class="t x" style="right:9px;top:832px">0.5</div>
<div class="t v" style="left:1649px;top:848px;color:#888">Total Weight:</div><div class="t x" style="right:9px;top:848px">6.4 lb</div>
<div class="r" style="left:1649px;top:870px;width:262px;height:1px;background:#eee"></div>
<div class="t" style="left:1649px;top:880px;font-weight:bold;color:#777">Open Balance</div>
<div class="t v" style="left:1649px;top:895px;color:#888">SubTotal:</div><div class="t x" style="right:9px;top:895px">$1.98</div>
<div class="t v" style="left:1649px;top:910px;color:#888">Discount:</div><div class="t x" style="right:9px;top:910px">$0</div>
<div class="t v" style="left:1649px;top:925px;color:#888">Tax:</div><div class="t x" style="right:9px;top:925px">$0.18</div>
<div class="t" style="left:1649px;top:940px;font-weight:bold;color:#777">Total:</div><div class="t" style="right:9px;top:940px;font-weight:bold;color:#777">$2.16</div>
<div class="t bl" style="left:1649px;top:955px">Currency:</div>
<div class="r" style="left:1649px;top:977px;width:262px;height:1px;background:#eee"></div>
<div class="t" style="left:1649px;top:987px;font-weight:bold;color:#777">Payments</div><div class="t" style="right:9px;top:987px;font-weight:bold;color:#777">$0</div>
<div class="t" style="left:1649px;top:1002px;font-weight:bold;color:#777">Total Applied:</div><div class="t" style="right:9px;top:1002px;font-weight:bold;color:#777">$0.00</div>
<div class="t" style="left:1649px;top:1016px;font-weight:bold;color:#777">Amount Due:</div><div class="t" style="right:9px;top:1016px;font-weight:bold;color:#f66">$2.16</div>

<!-- dialog 1 -->
<div class="r" style="left:560px;top:258px;width:800px;height:524px;background:#fff;border:1px solid #333;box-sizing:border-box"></div>
<div class="r" style="left:560px;top:258px;width:800px;height:36px;background:#424242"></div>
<svg style="left:579px;top:268px" width="17" height="18" viewBox="0 0 20 20"><circle cx="10" cy="10" r="9.500" fill="#fff"/><path d="M12.500.9A9.500 9.500 0 1 0 12.500 19.100 13 13 0 0 0 15.500 10 13 13 0 0 0 12.500.9z" fill="#0b5fa5"/><path d="M5.500 7.500h7M6.500 10h6M5.500 12.500h7" stroke="#fff"/><path d="M12.500 7.500h3M12.500 10h4M12.500 12.500h3" stroke="#0b5fa5"/></svg>
<div class="t" style="left:615px;top:269px;font-size:13.800px;color:#eee">Customer Account Verification</div>
<svg style="left:1326px;top:271px" width="10" height="10" stroke="#eee"><path d="M0 0l10 10M10 0L0 10"/></svg>
<div class="t" style="left:577px;top:321px;color:#808080">Account is on credit hold, <b>SO-0048211-D</b></div>
<div class="t" style="left:577px;top:341px;color:#808080"><b>Past Due:</b> $715.38</div>
<div class="t" style="left:577px;top:356px;color:#808080"><b>Manual Hold:</b></div>
<div class="t bl" style="left:587px;top:379px;font-weight:bold">OPEN INVOICES (9)</div>
<div class="t bl" style="left:716px;top:379px;font-weight:bold">SALE ORDERS</div>
<div class="r" style="left:577px;top:401px;width:130px;height:2px;background:#689fbf"></div>

<div class="r" style="left:577px;top:418px;width:766px;height:302px;border:1px solid #eee;box-sizing:border-box"></div>
<div class="r" style="left:578px;top:449px;width:764px;height:216px;background:repeating-linear-gradient(#f3f6fa 0 24px,#fff 24px 48px)"></div>
<div class="r" style="left:694px;top:419px;width:1px;height:246px;background:#eee"></div>
<div class="r" style="left:1224px;top:419px;width:1px;height:246px;background:#eee"></div>
<div class="t" style="left:583px;top:428px;color:#888">Invoice #</div>
<div class="t" style="left:700px;top:428px;color:#888">SO #</div>
<div class="t v" style="left:1230px;top:428px">Open Balance</div>
<div class="t bl" style="left:590px;top:456px;font-size:12px">I-0046241</div><div class="t bl" style="left:700px;top:456px;font-size:12px">SO-0046241</div><div class="t" style="left:1231px;top:456px;color:#888">$13.29</div>
<div class="t bl" style="left:590px;top:479px;font-size:12px">I-0046242</div><div class="t bl" style="left:700px;top:479px;font-size:12px">SO-0046242</div><div class="t" style="left:1231px;top:479px;color:#888">$136.09</div>
<div class="t bl" style="left:590px;top:504px;font-size:12px">I-0046262</div><div class="t bl" style="left:700px;top:504px;font-size:12px">SO-0046262</div><div class="t" style="left:1231px;top:504px;color:#888">$210.53</div>
<div class="t bl" style="left:590px;top:528px;font-size:12px">I-0046262-1</div><div class="t bl" style="left:700px;top:528px;font-size:12px">SO-0046262</div><div class="t" style="left:1231px;top:528px;color:#888">$210.53</div>
<div class="t bl" style="left:590px;top:551px;font-size:12px">I-0046334-D</div><div class="t bl" style="left:700px;top:551px;font-size:12px">SO-0046334</div><div class="t" style="left:1231px;top:551px;color:#888">$5.44</div>
<div class="t bl" style="left:590px;top:576px;font-size:12px">I-0047600-1</div><div class="t bl" style="left:700px;top:576px;font-size:12px">SO-0047600</div><div class="t" style="left:1231px;top:576px;color:#888">$31.50</div>
<div class="t bl" style="left:590px;top:599px;font-size:12px">I-0047967</div><div class="t bl" style="left:700px;top:599px;font-size:12px">SO-0047967</div><div class="t" style="left:1231px;top:599px;color:#888">$10.00</div>
<div class="t bl" style="left:590px;top:623px;font-size:12px">I-0048007</div><div class="t bl" style="left:700px;top:623px;font-size:12px">SO-0048007</div><div class="t" style="left:1231px;top:623px;color:#888">$38.00</div>
<div class="t bl" style="left:590px;top:647px;font-size:12px">I-0048046</div><div class="t bl" style="left:700px;top:647px;font-size:12px">SO-0048046</div><div class="t" style="left:1231px;top:647px;color:#888">$60.00</div>

<div class="b p" style="left:577px;top:741px;width:125px;height:25px">ADMIN OVERRIDE</div>
<div class="b" style="left:1063px;top:741px;width:75px;height:25px">CANCEL</div>
<div class="b p" style="left:1148px;top:741px;width:82px;height:25px">PAY NOW</div>
<div class="b p" style="left:1240px;top:741px;width:103px;height:25px">CREDIT HOLD</div>

<!-- dialog 2 -->
<div class="r" style="left:760px;top:320px;width:400px;height:399px;background:#fff;border:1px solid #333;box-sizing:border-box"></div>
<div class="r" style="left:760px;top:320px;width:400px;height:36px;background:#424242"></div>
<svg style="left:779px;top:329px" width="18" height="18" viewBox="0 0 20 20"><circle cx="10" cy="10" r="9.500" fill="#fff"/><path d="M12.500.9A9.500 9.500 0 1 0 12.500 19.100 13 13 0 0 0 15.500 10 13 13 0 0 0 12.500.9z" fill="#0b5fa5"/><path d="M5.500 7.500h7M6.500 10h6M5.500 12.500h7" stroke="#fff"/><path d="M12.500 7.500h3M12.500 10h4M12.500 12.500h3" stroke="#0b5fa5"/></svg>
<div class="t" style="left:815px;top:331px;font-size:14px;color:#eee">Admin Verification</div>
<svg style="left:1126px;top:333px" width="10" height="10" stroke="#eee"><path d="M0 0l10 10M10 0L0 10"/></svg>
<div class="t" style="left:777px;top:378px;font-size:12px;color:#666">What orders should be overridden?</div>
<svg style="left:777px;top:404px" width="14" height="14" fill="none"><circle cx="7" cy="7" r="6" stroke="#005f94"/></svg>
<div class="t" style="left:794px;top:403px;color:#666;font-size:12px">Override only Sale Order</div>
<svg style="left:777px;top:429px" width="14" height="14" fill="none"><circle cx="7" cy="7" r="6" stroke="#005f94"/><circle cx="7" cy="7" r="4" fill="#005f94"/></svg>
<div class="t" style="left:794px;top:428px;color:#666;font-size:12px">Override Sale Order and Shipping</div>
<div class="t v" style="left:777px;top:459px">ADMIN</div>
<div class="t" style="left:814px;top:456px;font-size:16px;color:#e33">*</div>
<div class="r" style="left:777px;top:476px;width:340px;height:25px;background:#f4f4f4;border-radius:2px"></div>
<div class="t v" style="left:785px;top:481px;font-size:12px">KArina</div>
<svg style="left:1131px;top:483px" width="13" height="13" stroke="#005f94" stroke-width="1.800"><path d="M1 1l11 11M12 1L1 12"/></svg>
<div class="t v" style="left:777px;top:511px">PASSWORD</div>
<div class="r" style="left:777px;top:529px;width:366px;height:25px;background:#f4f4f4;border-radius:2px"></div>
<div class="t" style="left:781px;top:535px;font-size:20px;color:#666;letter-spacing:.6px">•••••••</div>
<div class="t v" style="left:777px;top:575px">REASON</div>
<div class="r" style="left:777px;top:592px;width:366px;height:66px;background:#f4f4f4;border-radius:2px"></div>
<div class="t v" style="left:785px;top:601px;font-size:12px">tgjy</div>
<div class="b" style="left:975px;top:678px;width:75px;height:25px;color:#00619a;background:#f0f0f0">CANCEL</div>
<div class="b" style="left:1060px;top:678px;width:83px;height:25px;background:#00619a;color:#fff">OVERRIDE</div>

<!-- dialog 3 -->
<div class="r" style="left:815px;top:471px;width:311px;height:152px;background:#fff;border:1px solid #666;box-sizing:border-box;box-shadow:0 6px 20px rgba(0,0,0,.35)"></div>
<div class="r" style="left:816px;top:580px;width:309px;height:42px;background:#f0f0f0"></div>
<div class="t" style="left:824px;top:479px;font-size:12px;color:#000">OMS</div>
<svg style="left:1105px;top:481px" width="11" height="11" stroke="#222"><path d="M.5.5l10 10M10.500.5l-10 10"/></svg>
<svg style="left:836px;top:524px" width="34" height="34" viewBox="0 0 34 34"><defs><radialGradient id="e" cx=".4" cy=".3" r=".8"><stop offset="0" stop-color="#e8343a"/><stop offset="1" stop-color="#8c0a10"/></radialGradient></defs><circle cx="17" cy="17" r="16.500" fill="#ddd" stroke="#888"/><circle cx="17" cy="17" r="14" fill="url(#e)"/><path d="M11 11l12 12M23 11L11 23" stroke="#eee" stroke-width="4"/></svg>
<div class="t" style="left:878px;top:534px;font-size:11.700px;color:#000">Sorry, you don't have enough permissions</div>
<div class="r" style="left:1035px;top:590px;width:75px;height:22px;background:#f0f0f0;border:2px solid #555;border-top-width:1px;border-left-width:1px;box-sizing:border-box;color:#000;font-size:12px;line-height:19px;text-align:center">OK</div>

</body></html>
